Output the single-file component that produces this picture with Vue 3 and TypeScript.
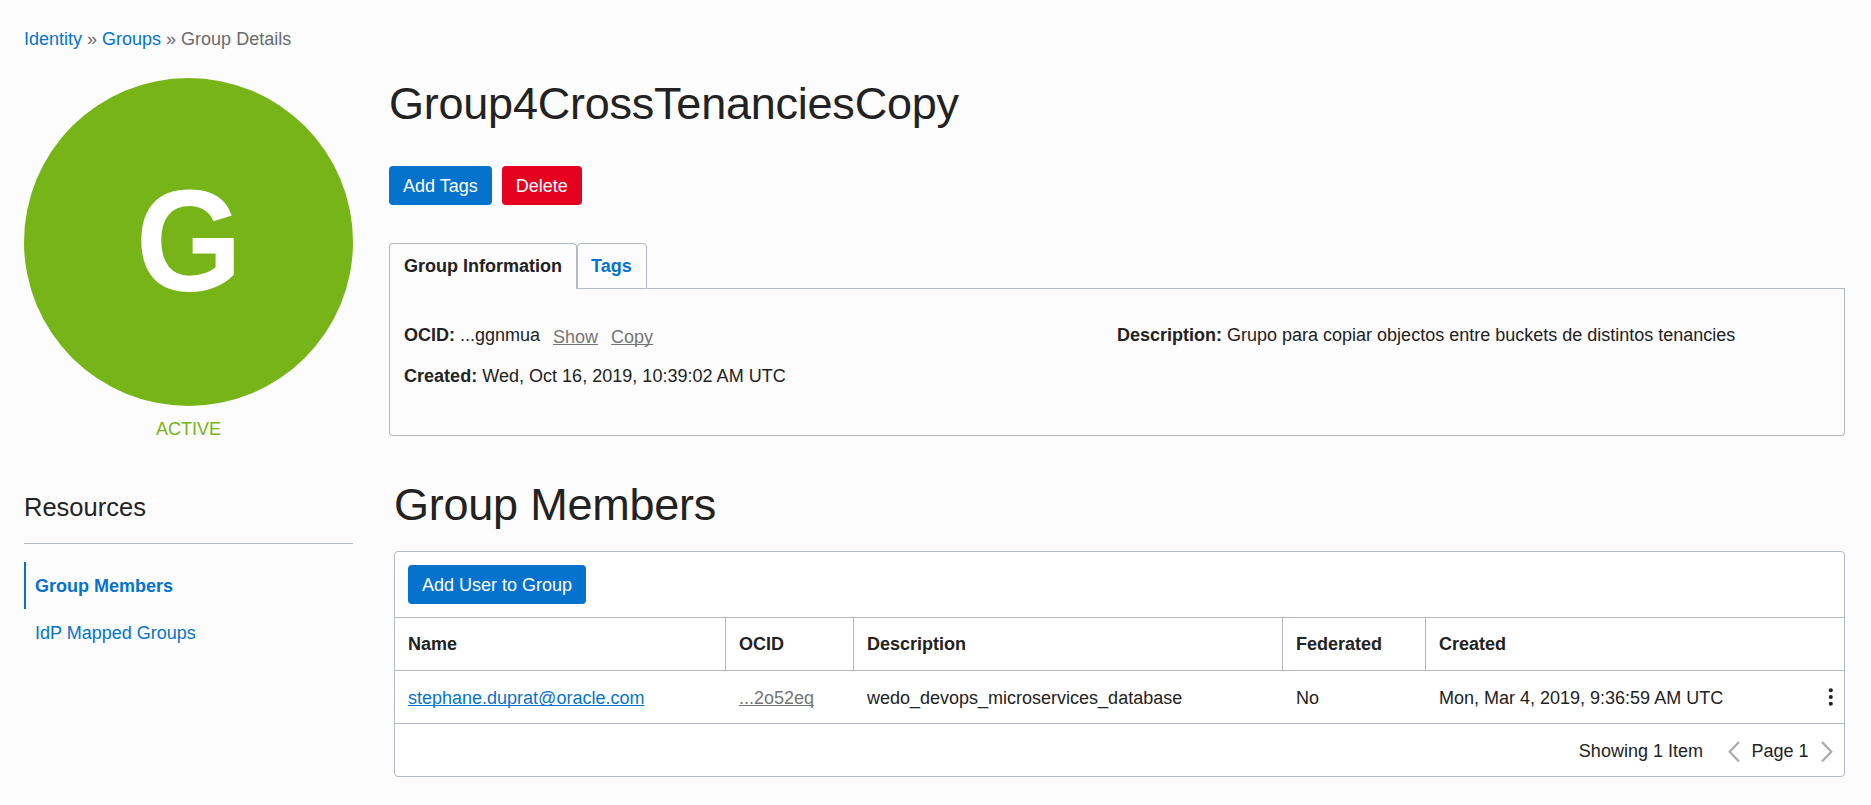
<script setup lang="ts">
interface Member {
  name: string
  ocid: string
  description: string
  federated: string
  created: string
}

const columns: string[] = ['Name', 'OCID', 'Description', 'Federated', 'Created']

const members: Member[] = [
  {
    name: 'stephane.duprat@oracle.com',
    ocid: '...2o52eq',
    description: 'wedo_devops_microservices_database',
    federated: 'No',
    created: 'Mon, Mar 4, 2019, 9:36:59 AM UTC',
  },
]
</script>

<template>
  <div class="page">
    <nav class="crumbs"><a>Identity</a> » <a>Groups</a> » Group Details</nav>

    <div class="columns">
      <aside class="side">
        <div class="avatar"><span class="letter">G</span></div>
        <div class="status">ACTIVE</div>
        <h3 class="side-title">Resources</h3>
        <ul class="side-nav">
          <li class="current"><a>Group Members</a></li>
          <li><a>IdP Mapped Groups</a></li>
        </ul>
      </aside>

      <main class="main">
        <h1 class="title">Group4CrossTenanciesCopy</h1>
        <div class="actions">
          <button class="btn">Add Tags</button>
          <button class="btn danger">Delete</button>
        </div>

        <div class="tabs">
          <div class="tab active">Group Information</div>
          <div class="tab tags">Tags</div>
          <div class="tab-rest"></div>
        </div>
        <section class="panel">
          <div class="info">
            <p><b>OCID:</b> ...ggnmua <a class="mini first">Show</a><a class="mini">Copy</a></p>
            <p class="date"><b>Created:</b> Wed, Oct 16, 2019, 10:39:02 AM UTC</p>
          </div>
          <div class="info">
            <p><b>Description:</b> Grupo para copiar objectos entre buckets de distintos tenancies</p>
          </div>
        </section>

        <section class="members">
          <h2 class="title">Group Members</h2>
          <div class="box">
            <div class="toolbar"><button class="btn">Add User to Group</button></div>
            <div class="row head">
              <div v-for="c in columns" :key="c" class="cell">{{ c }}</div>
            </div>
            <div v-for="m in members" :key="m.name" class="row">
              <div class="cell"><a class="user">{{ m.name }}</a></div>
              <div class="cell"><a class="ocid">{{ m.ocid }}</a></div>
              <div class="cell">{{ m.description }}</div>
              <div class="cell">{{ m.federated }}</div>
              <div class="cell created">
                {{ m.created }}
                <svg class="dots" width="6" height="20" viewBox="0 0 6 20">
                  <circle cx="2.8" cy="2.2" r="2.05" />
                  <circle cx="2.8" cy="9" r="2.05" />
                  <circle cx="2.8" cy="15.8" r="2.05" />
                </svg>
              </div>
            </div>
            <div class="footer">
              <span class="count">Showing 1 Item</span>
              <svg class="chev" width="12" height="22" viewBox="0 0 12 22"><path d="M11 1 1.7 10.8 11 20.6" /></svg>
              <span class="page-no">Page 1</span>
              <svg class="chev" width="12" height="22" viewBox="0 0 12 22"><path d="M1 1 10.3 10.8 1 20.6" /></svg>
            </div>
          </div>
        </section>
      </main>
    </div>
  </div>
</template>

<style>
body {
  background: #fcfcfc;
}
</style>

<style scoped>
.page {
  box-sizing: border-box;
  height: 805px;
  padding: 29px 26px 0 24px;
  overflow: hidden;
  font: 18px/20px "Liberation Sans", Arial, sans-serif;
  color: #222;
}
.page * {
  box-sizing: border-box;
}
a {
  color: #0572ce;
}
h1, h2, h3, p, ul {
  margin: 0;
  padding: 0;
  font-weight: normal;
}
.crumbs {
  height: 49px;
  color: #6b6b6b;
}
.columns {
  display: flex;
  gap: 36px;
}
.side {
  width: 329px;
  flex: none;
}
.avatar {
  display: flex;
  align-items: center;
  justify-content: center;
  height: 328px;
  padding-left: 2px;
  border-radius: 50%;
  background: #76b417;
  color: #fff;
  font-size: 144px;
  line-height: 144px;
  font-weight: bold;
}
.letter {
  transform: scaleX(0.95);
}
.status {
  margin-top: 13px;
  text-align: center;
  color: #76b417;
}
.side-title {
  height: 53px;
  margin-top: 52px;
  border-bottom: 1px solid #b3bac2;
  font-size: 25.5px;
  line-height: 32px;
}
.side-nav {
  margin-top: 18px;
  list-style: none;
}
.side-nav li {
  height: 47px;
  padding: 14px 0 0 9px;
  border-left: 2px solid transparent;
}
.side-nav .current {
  border-left-color: #0572ce;
  font-weight: bold;
}
.main {
  flex: 1;
  min-width: 0;
}
.title {
  font-size: 45px;
  line-height: 52px;
  letter-spacing: -0.23px;
}
.actions {
  display: flex;
  gap: 10px;
  margin-top: 36px;
}
.btn {
  height: 39px;
  padding: 0 14px;
  border: 0;
  border-radius: 4px;
  background: #0572ce;
  color: #fff;
  font: inherit;
}
.danger {
  background: #e5001f;
}
.tabs {
  display: flex;
  height: 46px;
  margin-top: 38px;
}
.tab {
  padding: 12px 0 0 14px;
  border: 1px solid #b3bac2;
  border-radius: 4px 4px 0 0;
  color: #0572ce;
  font-weight: bold;
  white-space: nowrap;
}
.tab.active {
  width: 188px;
  border-bottom: 0;
  color: #222;
}
.tags {
  width: 70px;
  padding-left: 13px;
}
.tab-rest {
  flex: 1;
  border-bottom: 1px solid #b3bac2;
}
.panel {
  display: flex;
  height: 147px;
  padding: 36px 14px 0;
  border: 1px solid #b3bac2;
  border-top: 0;
  border-radius: 0 0 4px 4px;
}
.info {
  width: 50%;
}
.info p {
  height: 41px;
}
.date {
  letter-spacing: 0.02px;
}
.mini {
  position: relative;
  top: 2px;
  margin-left: 13px;
  color: #757575;
  text-decoration: underline;
  text-decoration-skip-ink: none;
}
.mini.first {
  margin-left: 8px;
}
.members {
  margin: 43px 0 0 5px;
}
.box {
  height: 226px;
  margin-top: 20px;
  border: 1px solid #b3bac2;
  border-radius: 4px;
  background: #fff;
}
.toolbar {
  height: 65px;
  padding: 13px;
}
.row {
  display: grid;
  grid-template-columns: 331px 128px 429px 143px 1fr;
  height: 53px;
  border-top: 1px solid #b3bac2;
}
.cell {
  padding: 17px 0 0 13px;
}
.head .cell {
  padding-top: 16px;
  border-right: 1px solid #b3bac2;
  font-weight: bold;
}
.head .cell:last-child {
  border-right: 0;
}
.user, .ocid {
  text-decoration: underline;
  text-decoration-skip-ink: none;
}
.ocid {
  color: #757575;
}
.created {
  display: flex;
  justify-content: space-between;
  padding-right: 10px;
}
.dots {
  fill: #222;
}
.footer {
  display: flex;
  justify-content: flex-end;
  height: 53px;
  padding: 17px 11px 0 0;
  border-top: 1px solid #b3bac2;
}
.count {
  margin-right: 25px;
}
.page-no {
  margin: 0 12.5px 0 11.5px;
}
.chev {
  fill: none;
  stroke: #aaa;
  stroke-width: 2.2;
}
</style>
